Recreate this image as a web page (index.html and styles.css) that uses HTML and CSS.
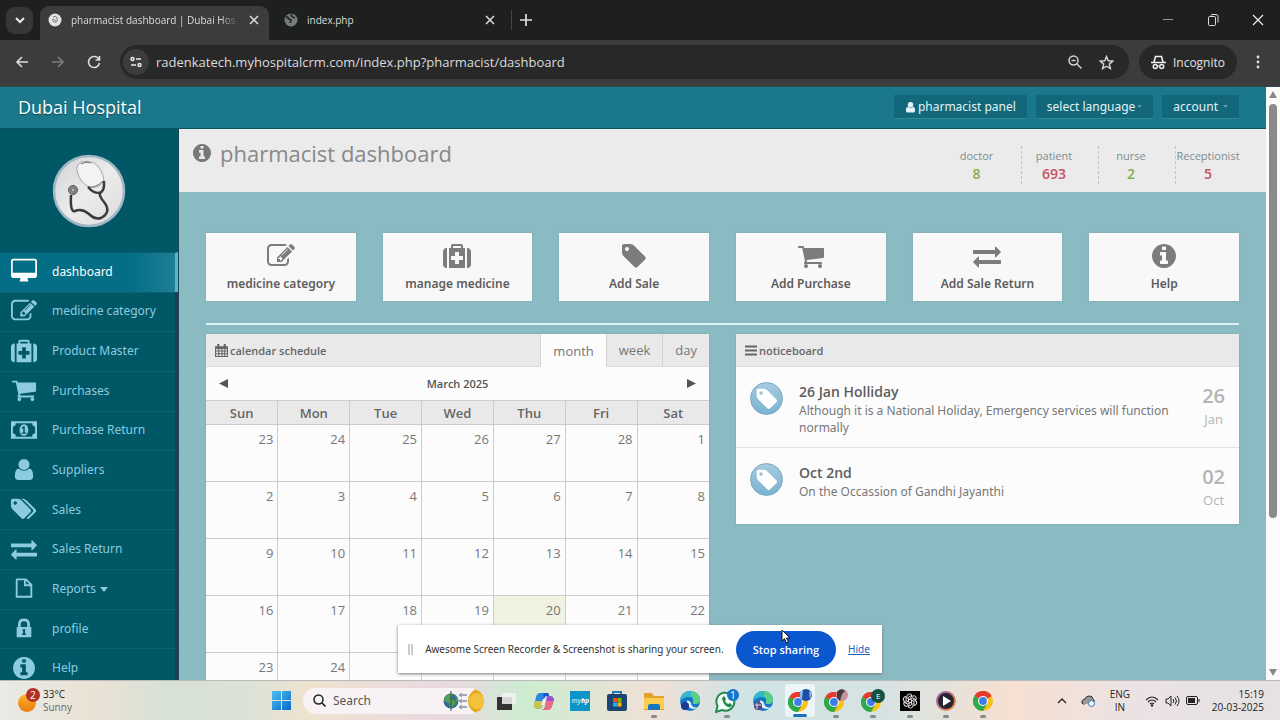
FILE: index.html
```
<!DOCTYPE html>
<html lang="en">
<head>
<meta charset="utf-8">
<title>pharmacist dashboard | Dubai Hospital</title>
<link rel="stylesheet" href="styles.css">
</head>
<body>

<svg class="sprite" aria-hidden="true">
  <symbol id="i-desktop" viewBox="0 0 1920 1792"><path d="M1792 992v-832q0-13-9.500-22.500t-22.500-9.500h-1600q-13 0-22.500 9.500t-9.500 22.500v832q0 13 9.500 22.500t22.500 9.500h1600q13 0 22.500-9.500t9.500-22.500zm128-832v1088q0 66-47 113t-113 47h-544q0 37 16 77.500t32 71 16 43.500q0 26-19 45t-45 19h-512q-26 0-45-19t-19-45q0-14 16-44t32-70 16-78h-544q-66 0-113-47t-47-113v-1088q0-66 47-113t113-47h1600q66 0 113 47t47 113z"/></symbol>
  <symbol id="i-edit" viewBox="0 0 1792 1792"><path d="M888 1184l116-116-152-152-116 116v56h96v96h56zm440-720q-16-16-33 1l-350 350q-17 17-1 33t33-1l350-350q17-17 1-33zm80 594v190q0 119-84.500 203.500t-203.500 84.500h-832q-119 0-203.500-84.500t-84.500-203.500v-832q0-119 84.500-203.500t203.500-84.500h832q63 0 117 25 15 7 18 23 3 17-9 29l-49 49q-14 14-32 8-23-6-45-6h-832q-66 0-113 47t-47 113v832q0 66 47 113t113 47h832q66 0 113-47t47-113v-126q0-13 9-22l64-64q15-15 35-7t20 29zm-96-738l288 288-672 672h-288v-288zm444 132l-92 92-288-288 92-92q28-28 68-28t68 28l152 152q28 28 28 68t-28 68z"/></symbol>
  <symbol id="i-medkit" viewBox="0 0 1792 1792"><path d="M1280 1120v-192q0-14-9-23t-23-9h-224v-224q0-14-9-23t-23-9h-192q-14 0-23 9t-9 23v224h-224q-14 0-23 9t-9 23v192q0 14 9 23t23 9h224v224q0 14 9 23t23 9h192q14 0 23-9t9-23v-224h224q14 0 23-9t9-23zm-640-736h512v-128h-512v128zm-384 0v1280h-32q-92 0-158-66t-66-158v-832q0-92 66-158t158-66h32zm1152 0v1280h-1024v-1280h128v-160q0-40 28-68t68-28h576q40 0 68 28t28 68v160h128zm384 224v832q0 92-66 158t-158 66h-32v-1280h32q92 0 158 66t66 158z"/></symbol>
  <symbol id="i-cart" viewBox="0 0 1792 1792"><path d="M704 1536q0 52-38 90t-90 38-90-38-38-90 38-90 90-38 90 38 38 90zm896 0q0 52-38 90t-90 38-90-38-38-90 38-90 90-38 90 38 38 90zm128-1088v512q0 24-16.500 42.500t-40.500 21.500l-1044 122q13 60 13 70 0 16-24 64h920q26 0 45 19t19 45-19 45-45 19h-1024q-26 0-45-19t-19-45q0-11 8-31.500t16-36 21.500-40 15.500-29.500l-177-823h-204q-26 0-45-19t-19-45 19-45 45-19h256q16 0 28.500 6.500t19.500 15.500 13 24.500 8 26 5.500 29.500 4.500 26h1201q26 0 45 19t19 45z"/></symbol>
  <symbol id="i-money" viewBox="0 0 27 24"><path fill-rule="evenodd" d="M0 3h27v18H0zM5 5Q5 8 2 8.500v7Q5 16 5 19h17Q22 16 25 15.500v-7Q22 8 22 5z"/><path fill-rule="evenodd" d="M13.500 6c6 0 6 12 0 12s-6-12 0-12zm.8 2h-1.500l-2 1.800 1 1 .9-.7v4.400H11V16h5v-1.500h-1.700z"/></symbol>
  <symbol id="i-user" viewBox="0 0 24 24"><circle cx="12" cy="7" r="6"/><path d="M6 11.500q6 5 12 0 4 1 4 8.500 0 4-4 4H6q-4 0-4-4 0-7.500 4-8.500z"/></symbol>
  <symbol id="i-tag" viewBox="0 0 1792 1792"><path d="M576 448q0-53-37.500-90.500t-90.500-37.500-90.500 37.500-37.500 90.500 37.500 90.500 90.500 37.500 90.500-37.500 37.500-90.500zm1067 576q0 53-37 90l-491 492q-39 37-91 37-53 0-90-37l-715-716q-38-37-64.500-101t-26.500-117v-416q0-52 38-90t90-38h416q53 0 117 26.500t102 64.500l715 714q37 39 37 91z"/></symbol>
  <symbol id="i-tags" viewBox="0 0 1960 1792"><path d="M448 448q0-53-37.500-90.500t-90.500-37.500-90.500 37.500-37.500 90.500 37.500 90.500 90.500 37.500 90.500-37.500 37.500-90.500zm1067 576q0 53-37 90l-491 492q-39 37-91 37-53 0-90-37l-715-716q-38-37-64.500-101t-26.500-117v-416q0-52 38-90t90-38h416q53 0 117 26.500t102 64.500l715 714q37 39 37 91zm384 0q0 53-37 90l-491 492q-39 37-91 37-36 0-59-14t-53-45l470-470q37-37 37-90 0-52-37-91l-715-714q-38-38-102-64.500t-117-26.500h224q53 0 117 26.500t102 64.500l715 714q37 39 37 91z"/></symbol>
  <symbol id="i-exchange" viewBox="0 0 1792 1792"><path d="M1792 1184v192q0 13-9.500 22.500t-22.500 9.500h-1376v192q0 13-9.500 22.500t-22.500 9.500q-12 0-24-10l-319-320q-9-9-9-22 0-14 9-23l320-320q9-9 23-9 13 0 22.500 9.500t9.500 22.500v192h1376q13 0 22.500 9.500t9.500 22.500zm0-544q0 14-9 23l-320 320q-9 9-23 9-13 0-22.500-9.500t-9.500-22.500v-192h-1376q-13 0-22.500-9.500t-9.500-22.500v-192q0-13 9.500-22.500t22.500-9.500h1376v-192q0-14 9-23t23-9q12 0 24 10l319 319q9 9 9 23z"/></symbol>
  <symbol id="i-file" viewBox="0 0 24 24"><path fill-rule="evenodd" d="M4 1.500h10.500L21 8v14.500H3v-20zm1 2v17h14V10h-7V3.500zm9 .5v4h4z"/></symbol>
  <symbol id="i-lock" viewBox="0 0 24 24"><path fill-rule="evenodd" d="M4 11h1.500V8q0-6.500 6.500-6.500T18.500 8v3H20v11H4zm4.500 0h7V8q0-3.500-3.500-3.500T8.500 8zM12 13q-2 0-2 1.700h1V18h-1v1.500h4V18h-.8v-5z"/></symbol>
  <symbol id="i-info" viewBox="128 128 1536 1536"><path d="M1152 1376v-160q0-14-9-23t-23-9h-96v-512q0-14-9-23t-23-9h-320q-14 0-23 9t-9 23v160q0 14 9 23t23 9h96v320h-96q-14 0-23 9t-9 23v160q0 14 9 23t23 9h448q14 0 23-9t9-23zm-128-896v-160q0-14-9-23t-23-9h-192q-14 0-23 9t-9 23v160q0 14 9 23t23 9h192q14 0 23-9t9-23zm640 416q0 209-103 385.500t-279.500 279.500-385.500 103-385.500-103-279.500-279.500-103-385.500 103-385.500 279.500-279.500 385.500-103 385.500 103 279.500 279.500 103 385.500z"/></symbol>
  <symbol id="i-calendar" viewBox="0 0 12 12"><path fill-rule="evenodd" d="M0 2h2V0h2v2h4V0h2v2h2v10H0zm1 2.500V6h2V4.500zm3 0V6h2V4.500zm3 0V6h1.500V4.500zm2.500 0V6H11V4.500zM1 7v1.500h2V7zm3 0v1.500h2V7zm3 0v1.500h1.500V7zm2.500 0v1.500H11V7zM1 9.500V11h2V9.500zm3 0V11h2V9.500zm3 0V11h1.500V9.500zm2.500 0V11H11V9.500z"/></symbol>
  <symbol id="i-bars" viewBox="0 0 12 12"><path d="M0 1.500h12v2H0zM0 5.500h12v2H0zM0 9.500h12v2H0z"/></symbol>
  <symbol id="i-caret" viewBox="0 0 8 5"><path d="M0 0h8L4 5z"/></symbol>
  <symbol id="i-close" viewBox="0 0 10 10"><path d="M1 1l8 8M9 1L1 9" fill="none" stroke="currentColor" stroke-width="1.500"/></symbol>
  <symbol id="i-chrome" viewBox="0 0 20 20"><circle cx="10" cy="10" r="10" fill="#fbc116"/><path d="M10 10L1.300 5A10 10 0 0 1 18.700 5z" fill="#e33b2e"/><path d="M10 10L1.300 5A10 10 0 0 0 10 20l4.300-7.500z" fill="#2da94f"/><circle cx="10" cy="10" r="5" fill="#fff"/><circle cx="10" cy="10" r="3.900" fill="#3b7ded"/></symbol>
  <symbol id="i-edge" viewBox="0 0 20 20"><circle cx="10" cy="10" r="10" fill="#1676c4"/><path d="M0 9C1 3 5 0 10 0c6 0 10 4 10 8 0 3-2 5-5 5-2 0-3-1-2-2 1-3-1-5-4-5-4 0-8 2-9 5z" fill="#35b8cf"/><path d="M11 0c5 0 9 4 9 8 0 3-2 5-5 5-2 0-3-1-2-2 1-3 0-5-2-6z" fill="#59cf87"/><path d="M7 10c-1 4 2 8 7 8 2 0 4-1 5-2-3 1-7 1-8-4-1-2-3-3-4-2z" fill="#dceffa"/></symbol>
</svg>

<header class="tabstrip">
  <button class="tab-search" aria-label="Search tabs"><svg width="10" height="7" viewBox="0 0 10 7"><path d="M1 1l4 4 4-4" fill="none" stroke="#e8e8e8" stroke-width="2"/></svg></button>
  <div class="tab active">
    <svg width="14" height="14" viewBox="0 0 14 14"><circle cx="7" cy="7" r="6.500" fill="#e3e3e3"/><path d="M5 4q3-2 4 1t-1 4-3-1 0-2 4 3" fill="none" stroke="#777"/></svg>
    <span class="tab-title">pharmacist dashboard | Dubai Hos</span>
    <button class="x" aria-label="Close tab"><svg width="10" height="10"><use href="#i-close"/></svg></button>
  </div>
  <div class="tab">
    <svg width="14" height="14" viewBox="0 0 14 14"><circle cx="7" cy="7" r="6.500" fill="#777b7b"/><path d="M2 4q2 0 3 2l2 1-1 3M8 1q-2 2 1 3l2 1" fill="none" stroke="#272a2a" stroke-width="1.800"/></svg>
    <span class="tab-title">index.php</span>
    <button class="x" aria-label="Close tab"><svg width="10" height="10"><use href="#i-close"/></svg></button>
  </div>
  <button class="newtab" aria-label="New tab"><svg width="12" height="12" viewBox="0 0 12 12"><path d="M6 0v12M0 6h12" stroke="#e0e0e0" stroke-width="1.700"/></svg></button>
  <div class="win">
    <button aria-label="Minimize"><svg width="12" height="12" viewBox="0 0 12 12"><path d="M1 5.500h10" stroke="#999"/></svg></button>
    <button aria-label="Restore"><svg width="12" height="12" viewBox="0 0 12 12"><path d="M1.500 3.500q0-1 1-1h5q1 0 1 1v7q0 1-1 1h-5q-1 0-1-1zM4 1.500q0-1 1-1h4q2 0 2 2v6" fill="none" stroke="#ddd"/></svg></button>
    <button aria-label="Close"><svg width="12" height="12" viewBox="0 0 12 12"><path d="M1 1l10 10M11 1L1 11" stroke="#eee" stroke-width="1.200"/></svg></button>
  </div>
</header>

<div class="toolbar">
  <button class="tool" aria-label="Back"><svg width="14" height="12" viewBox="0 0 14 12"><path d="M13 6H2M7 1L2 6l5 5" fill="none" stroke="#ddd" stroke-width="1.600"/></svg></button>
  <button class="tool" aria-label="Forward"><svg width="14" height="12" viewBox="0 0 14 12"><path d="M1 6h11M7 1l5 5-5 5" fill="none" stroke="#7c7c7c" stroke-width="1.600"/></svg></button>
  <button class="tool" aria-label="Reload"><svg width="14" height="14" viewBox="0 0 14 14"><path d="M12 4.500A5.500 5.500 0 1 0 12.500 8M12.500 1v4h-4" fill="none" stroke="#ddd" stroke-width="1.600"/></svg></button>
  <div class="omnibox">
    <button class="site" aria-label="Site information"><svg width="12" height="12" viewBox="0 0 12 12"><g fill="none" stroke="#e8e8e8" stroke-width="1.500"><circle cx="2.500" cy="3" r="1.500"/><path d="M6 3h5M1 9h5"/><circle cx="9.500" cy="9" r="1.500"/></g></svg></button>
    <input class="url" type="text" aria-label="Address" value="radenkatech.myhospitalcrm.com/index.php?pharmacist/dashboard">
    <button aria-label="Zoom"><svg width="14" height="14" viewBox="0 0 14 14"><g fill="none" stroke="#d0d0d0" stroke-width="1.500"><circle cx="5.500" cy="5.500" r="4.500"/><path d="M9 9l4.500 4.500M3.500 5.500h4"/></g></svg></button>
    <button aria-label="Bookmark"><svg width="15" height="15" viewBox="0 0 15 15"><path d="M7.500 1.500l1.700 4.300 4.600.3-3.500 3 1.100 4.500-3.900-2.400-3.900 2.400 1.100-4.500-3.500-3 4.600-.3z" fill="none" stroke="#d8d8d8" stroke-width="1.400"/></svg></button>
  </div>
  <button class="incognito"><svg width="15" height="15" viewBox="0 0 15 15"><path d="M0 7.500h15M3 7l1.500-5.500h6L12 7" fill="none" stroke="#eee" stroke-width="1.600"/><path d="M6.500 11.500q1-1 2 0" fill="none" stroke="#eee"/><circle cx="4.300" cy="11.500" r="2" fill="none" stroke="#eee" stroke-width="1.500"/><circle cx="10.700" cy="11.500" r="2" fill="none" stroke="#eee" stroke-width="1.500"/></svg>Incognito</button>
  <button class="kebab" aria-label="Menu"><svg width="4" height="16" viewBox="0 0 4 16"><g fill="#ddd"><circle cx="2" cy="3" r="1.400"/><circle cx="2" cy="8" r="1.400"/><circle cx="2" cy="13" r="1.400"/></g></svg></button>
</div>

<div class="viewport">
<div class="page">
  <div class="navbar">
    <a class="brand" href="#">Dubai Hospital</a>
    <div class="navbtns">
      <a class="navbtn" href="#"><svg width="11" height="12"><use href="#i-user"/></svg>pharmacist panel</a>
      <button class="navbtn">select language<svg class="caret" width="5" height="3"><use href="#i-caret"/></svg></button>
      <button class="navbtn">account <svg class="caret gap" width="5" height="3"><use href="#i-caret"/></svg></button>
    </div>
  </div>

  <div class="columns">
    <nav class="sidebar">
      <div class="avatar">
        <svg width="74" height="74" viewBox="0 0 74 74">
          <defs><linearGradient id="disc" x2="1" y2="1"><stop offset="0" stop-color="#cfd2d4"/><stop offset=".5" stop-color="#ececec"/><stop offset="1" stop-color="#dadada"/></linearGradient></defs>
          <circle cx="37" cy="37" r="35" fill="url(#disc)" stroke="#9fb8c4" stroke-width="2.500"/>
          <path d="M30 8q-6 2-5 9 3 13 13 16 10 2 14-7-2-12-10-17-6-3-12-1z" fill="#f2f3f3" stroke="#a2a5a6"/>
          <path d="M29 10q5-3 10-1M36 33q8 1 15-6" fill="none" stroke="#777"/>
          <path d="M52 27q1 11-5 12-6 0-11-6M48 39q-1 3 4 9 8 10-3 16-6 2-12-4-7-6-14-3-5 2-4-16" fill="none" stroke="#3b3b3b" stroke-width="2.500"/>
          <circle cx="21" cy="36" r="4.500" fill="#8b8b8b" stroke="#555"/><circle cx="21" cy="36" r="2" fill="#bbb" stroke="#666"/>
        </svg>
      </div>
      <ul class="menu">
        <li class="current"><a href="#"><svg><use href="#i-desktop"/></svg>dashboard</a></li>
        <li><a href="#"><svg><use href="#i-edit"/></svg>medicine category</a></li>
        <li><a href="#"><svg><use href="#i-medkit"/></svg>Product Master</a></li>
        <li><a href="#"><svg><use href="#i-cart"/></svg>Purchases</a></li>
        <li><a href="#"><svg><use href="#i-money"/></svg>Purchase Return</a></li>
        <li><a href="#"><svg class="sm"><use href="#i-user"/></svg>Suppliers</a></li>
        <li><a href="#"><svg><use href="#i-tags"/></svg>Sales</a></li>
        <li><a href="#"><svg><use href="#i-exchange"/></svg>Sales Return</a></li>
        <li><a href="#"><svg class="sm"><use href="#i-file"/></svg>Reports<svg class="drop"><use href="#i-caret"/></svg></a></li>
        <li><a href="#"><svg class="sm"><use href="#i-lock"/></svg>profile</a></li>
        <li><a href="#"><svg class="sm"><use href="#i-info"/></svg>Help</a></li>
      </ul>
    </nav>

    <main class="main">
      <div class="titlebar">
        <h1><svg width="18" height="18"><use href="#i-info"/></svg>pharmacist dashboard</h1>
        <dl class="stats">
          <div><dt>doctor</dt><dd class="green">8</dd></div>
          <div><dt>patient</dt><dd class="red">693</dd></div>
          <div><dt>nurse</dt><dd class="green">2</dd></div>
          <div><dt>Receptionist</dt><dd class="red">5</dd></div>
        </dl>
      </div>

      <div class="body">
        <div class="tiles">
          <a href="#"><svg><use href="#i-edit"/></svg>medicine category</a>
          <a href="#"><svg><use href="#i-medkit"/></svg>manage medicine</a>
          <a href="#"><svg><use href="#i-tag"/></svg>Add Sale</a>
          <a href="#"><svg><use href="#i-cart"/></svg>Add Purchase</a>
          <a href="#"><svg><use href="#i-exchange"/></svg>Add Sale Return</a>
          <a href="#"><svg class="round"><use href="#i-info"/></svg>Help</a>
        </div>
        <hr>
        <div class="panels">
          <section class="box">
            <div class="box-head">
              <h2><svg width="13" height="13"><use href="#i-calendar"/></svg>calendar schedule</h2>
              <div class="views"><button class="on">month</button><button>week</button><button>day</button></div>
            </div>
            <div class="monthnav">
              <button aria-label="Previous"><svg width="9" height="9" viewBox="0 0 9 9"><path d="M9 0v9L0 4.500z"/></svg></button>
              <b>March 2025</b>
              <button aria-label="Next"><svg width="9" height="9" viewBox="0 0 9 9"><path d="M0 0v9l9-4.500z"/></svg></button>
            </div>
            <table class="cal">
              <thead><tr><th>Sun</th><th>Mon</th><th>Tue</th><th>Wed</th><th>Thu</th><th>Fri</th><th>Sat</th></tr></thead>
              <tbody>
                <tr><td>23</td><td>24</td><td>25</td><td>26</td><td>27</td><td>28</td><td>1</td></tr>
                <tr><td>2</td><td>3</td><td>4</td><td>5</td><td>6</td><td>7</td><td>8</td></tr>
                <tr><td>9</td><td>10</td><td>11</td><td>12</td><td>13</td><td>14</td><td>15</td></tr>
                <tr><td>16</td><td>17</td><td>18</td><td>19</td><td class="today">20</td><td>21</td><td>22</td></tr>
                <tr><td>23</td><td>24</td><td>25</td><td>26</td><td>27</td><td>28</td><td>29</td></tr>
              </tbody>
            </table>
          </section>

          <section class="box">
            <div class="box-head"><h2><svg width="12" height="12"><use href="#i-bars"/></svg>noticeboard</h2></div>
            <article class="notice">
              <span class="badge"><svg width="24" height="24"><use href="#i-tag"/></svg></span>
              <div class="text"><h3>26 Jan Holliday</h3><p>Although it is a National Holiday, Emergency services will function normally</p></div>
              <div class="date"><b>26</b>Jan</div>
            </article>
            <article class="notice">
              <span class="badge"><svg width="24" height="24"><use href="#i-tag"/></svg></span>
              <div class="text"><h3>Oct 2nd</h3><p>On the Occassion of Gandhi Jayanthi</p></div>
              <div class="date"><b>02</b>Oct</div>
            </article>
          </section>
        </div>
      </div>
    </main>
  </div>
</div>
<div class="scrollbar">
  <svg width="8" height="7" viewBox="0 0 8 7"><path d="M4 0l4 7H0z" fill="#888"/></svg>
  <div class="track"><div class="thumb"></div></div>
  <svg width="8" height="7" viewBox="0 0 8 7"><path d="M4 7l4-7H0z" fill="#888"/></svg>
</div>
</div>

<div class="share">
  <span class="grip"></span>
  <span>Awesome Screen Recorder &amp; Screenshot is sharing your screen.</span>
  <button class="stop">Stop sharing<svg class="pointer" width="10" height="15" viewBox="0 0 10 15"><path d="M1 1v11l2.500-2.300L5.500 14l2-1-2-4H9z" fill="#fff" stroke="#111"/></svg></button>
  <a href="#">Hide</a>
</div>

<footer class="taskbar">
  <div class="weather">
    <svg width="24" height="26" viewBox="0 0 24 26"><defs><linearGradient id="sun" x2="0" y2="1"><stop offset="0" stop-color="#fbb423"/><stop offset="1" stop-color="#ec7a14"/></linearGradient></defs><circle cx="9" cy="15" r="9" fill="url(#sun)"/><circle cx="15" cy="7" r="7" fill="#b52f25"/><text x="12" y="11" font-size="10" fill="#fff">2</text></svg>
    <div>33°C<br><span>Sunny</span></div>
  </div>
  <div class="apps">
    <button class="start" aria-label="Start"><svg width="19" height="19" viewBox="0 0 19 19"><defs><linearGradient id="win" x2="1" y2="1"><stop offset="0" stop-color="#4cc1f4"/><stop offset="1" stop-color="#0a68c5"/></linearGradient></defs><path d="M0 0h9v9H0zM10 0h9v9h-9zM0 10h9v9H0zM10 10h9v9h-9z" fill="url(#win)"/></svg></button>
    <label class="search">
      <svg width="13" height="13" viewBox="0 0 13 13"><circle cx="5.500" cy="5.500" r="4.500" fill="none" stroke="#222" stroke-width="1.500"/><path d="M9 9l3.500 3.500" stroke="#222" stroke-width="1.700"/></svg>
      <input type="text" placeholder="Search" aria-label="Search">
      <svg width="41" height="24" viewBox="0 0 41 24"><circle cx="8" cy="12" r="7.500" fill="#316a9a"/><path d="M2 8q5-5 8-3l-2 5 5 2-2 5-4 2-1-5-5-2zM12 7l3 3-1 5z" fill="#4fa04f"/><path d="M8 2v20" stroke="#3c4b55"/><path d="M17 6h7M17 12h7M17 18h7" stroke="#8493a3" stroke-width="1.500"/><path d="M19 4l-3 2 3 2M19 10l-3 2 3 2M19 16l-3 2 3 2" fill="none" stroke="#8493a3"/><path d="M33 0l2 2 3-1v3l3 1-1 3 1 4-1 4 1 3-3 1v3l-3-1-2 2q-8-4-8-12t8-12z" fill="#e7a91c"/><circle cx="34" cy="12" r="8" fill="#f4c13a"/></svg>
    </label>
    <div class="icons">
      <button aria-label="Task view"><svg width="20" height="20" viewBox="0 0 20 20"><path d="M0 6h15v13H0z" fill="#333"/><path d="M5 2h14v11H5z" fill="#f3f3f3" fill-opacity=".85"/></svg></button>
      <button aria-label="Copilot"><svg width="20" height="20" viewBox="0 0 20 20"><path d="M6 2h7q2 0 2 3h-2q-2 0-3 3l-2 8q-1 2-4 2-4 0-4-4l2-8q1-4 4-4z" fill="#2d88e2"/><path d="M1 10h8l-1 6q-1 2-4 2-4 0-4-4z" fill="#c9c84a"/><path d="M13 5h3q4 0 4 4l-2 6q-1 4-5 4H8q2 0 3-3z" fill="#9554d8"/><path d="M12 10h7l-1 5q-1 4-5 4H8q2 0 3-3z" fill="#ee6c80"/><path d="M9 2h4q2 0 2 3h-3q-2 0-2 2z" fill="#1959c8"/><path d="M9 8h3l-2 6H7z" fill="#f7eef5"/></svg></button>
      <button aria-label="myhp"><span class="myhp">my<b>hp</b></span></button>
      <button aria-label="Store"><svg width="20" height="20" viewBox="0 0 20 20"><path d="M6 4V1h8v3" fill="none" stroke="#247bb8" stroke-width="2"/><rect y="3" width="20" height="17" rx="2" fill="#1d4573"/><path d="M6 7h4v4H6z" fill="#f25022"/><path d="M10.500 7h4v4h-4z" fill="#7fba00"/><path d="M6 11.500h4v4H6z" fill="#28a8ee"/><path d="M10.500 11.500h4v4h-4z" fill="#ffb900"/></svg></button>
      <button class="run" aria-label="Files"><svg width="20" height="20" viewBox="0 0 20 20"><path d="M0 2h8l2 3h10v14H0z" fill="#e2a32a"/><path d="M0 7h20v11H0z" fill="#fbcd4f"/><path d="M4 15q0-2 2-2h8q2 0 2 2v4H4z" fill="#1976bd"/></svg></button>
      <button aria-label="Edge"><svg width="20" height="20" viewBox="0 0 20 20"><use href="#i-edge" width="20" height="20"/><circle cx="5" cy="15" r="4" fill="#183c91"/></svg></button>
      <button class="run" aria-label="WhatsApp"><svg width="24" height="24" viewBox="0 0 24 24"><path d="M1 23l1.500-6A9 9 0 1 1 7 21z" fill="#f2fbf4" stroke="#238951" stroke-width="2"/><path d="M7 9l2-2 2 3-1 2q1 2 3 3l2-1 2 2q-1 3-4 2-5-2-6-9z" fill="#238951"/><circle cx="18" cy="6" r="6" fill="#1673ca"/><text x="15" y="10" font-size="10" fill="#fff">1</text></svg></button>
      <button aria-label="Edge"><svg width="20" height="20" viewBox="0 0 20 20"><use href="#i-edge" width="20" height="20"/><circle cx="5" cy="15" r="4" fill="#5a4687"/><path d="M2 14h6M4 12v6" stroke="#ddd"/></svg></button>
      <button class="run focus" aria-label="Chrome"><svg width="24" height="24" viewBox="0 0 24 24"><use href="#i-chrome" y="3" width="20" height="20"/><circle cx="18" cy="6" r="6" fill="#1b4fa8"/><path d="M12 2h3l-1 8-2-2zM21 2l3 2-2 7z" fill="#8fb8e8"/></svg></button>
      <button class="run" aria-label="Chrome"><svg width="24" height="24" viewBox="0 0 24 24"><use href="#i-chrome" y="3" width="20" height="20"/><circle cx="18" cy="6" r="6" fill="#c8909a"/><path d="M13 3q4-5 8-1l-3 3-2 7-3-3z" fill="#413c42"/></svg></button>
      <button class="run" aria-label="Chrome"><svg width="24" height="24" viewBox="0 0 24 24"><use href="#i-chrome" y="3" width="20" height="20"/><circle cx="17" cy="7" r="7" fill="#14523f"/><text x="15" y="10" font-size="8" fill="#fff">E</text></svg></button>
      <button class="run" aria-label="ChatGPT"><svg width="20" height="20" viewBox="0 0 20 20"><path d="M0 0h20v20H0z" fill="#000"/><g fill="none" stroke="#f2f2f2" stroke-width=".9"><path id="petal" d="M7 8V5.500q0-2.500 2.500-2.500 1.500 0 2.500 1.200L8.500 6.300V11"/><use href="#petal" transform="rotate(60 10 10)"/><use href="#petal" transform="rotate(120 10 10)"/><use href="#petal" transform="rotate(180 10 10)"/><use href="#petal" transform="rotate(240 10 10)"/><use href="#petal" transform="rotate(300 10 10)"/></g></svg></button>
      <button class="run" aria-label="Player"><svg width="20" height="20" viewBox="0 0 20 20"><defs><linearGradient id="ring" x2="1" y2="1"><stop offset="0" stop-color="#8c5bb0"/><stop offset="1" stop-color="#f2913a"/></linearGradient></defs><circle cx="10" cy="10" r="9" fill="#272330" stroke="url(#ring)" stroke-width="2"/><path d="M7 5l8 5-8 5z" fill="#fff"/></svg></button>
      <button class="run" aria-label="Chrome"><svg width="20" height="20"><use href="#i-chrome"/></svg></button>
    </div>
  </div>
  <div class="tray">
    <svg width="10" height="6" viewBox="0 0 10 6"><path d="M1 5l4-4 4 4" fill="none" stroke="#222" stroke-width="1.300"/></svg>
    <svg class="cloud" width="15" height="12" viewBox="0 0 15 12"><path d="M3 9.500q-3-1-2-3.500 1-2 3-2 1-3 4-3 4 0 4 3 2 1 1 3" fill="#999" stroke="#333"/><circle cx="10.500" cy="8.500" r="3" fill="#fff" stroke="#1d6fc0"/></svg>
    <div class="lang">ENG<br>IN</div>
    <svg width="14" height="12" viewBox="0 0 14 12"><path d="M1 5q6-6 12 0M3 7q4-4 8 0M5 9q2-2 4 0" fill="none" stroke="#222" stroke-width="1.100"/><circle cx="7" cy="10.500" r="1.200"/></svg>
    <svg width="15" height="12" viewBox="0 0 15 12"><path d="M1 4h2l3-3v10L3 8H1zM8 4q1.500 2 0 4M10 2.500q3 3.500 0 7M12 1q4 5 0 10" fill="none" stroke="#222"/></svg>
    <svg width="14" height="9" viewBox="0 0 14 9"><rect x=".5" y=".5" width="11" height="8" rx="1.500" fill="none" stroke="#222"/><path d="M2 2h7v5H2zM12.500 3h1v3h-1z"/></svg>
    <div class="clock">15:19<br>20-03-2025</div>
  </div>
</footer>

</body>
</html>
```
FILE: styles.css
```
* { box-sizing: border-box; }
body { margin: 0; height: 100vh; display: flex; flex-direction: column; overflow: hidden; font-family: "Open Sans", sans-serif; font-size: 13px; color: #666; }
button { border: 0; padding: 0; background: none; font: inherit; color: inherit; display: flex; align-items: center; justify-content: center; }
a { color: inherit; text-decoration: none; }
svg { fill: currentColor; flex: none; }
h1, h2, h3, p, ul, dl, dd { margin: 0; padding: 0; }
.sprite { display: none; }

/* browser window */
.tabstrip { height: 40px; flex: none; display: flex; align-items: flex-end; background: #1d201f; color: #ddd; font-size: 10px; padding-left: 6px; }
.tab-search { width: 27px; height: 27px; border-radius: 9px; background: #363837; align-self: center; margin-right: 7px; }
.tab { width: 236px; height: 34px; display: flex; align-items: center; gap: 9px; padding: 0 10px 6px 15px; }
.tab.active { width: 229px; background: #3c3c3c; border-radius: 9px 9px 0 0; padding: 0 10px 6px 8px; }
.tab-title { flex: 1; white-space: nowrap; }
.active .tab-title { -webkit-mask-image: linear-gradient(90deg, #000 88%, transparent); }
.newtab { width: 28px; height: 20px; margin: 0 0 10px 6px; border-left: 1px solid #444; }
.win { margin-left: auto; display: flex; align-self: center; }
.win button { width: 45px; height: 30px; }
.toolbar { height: 47px; flex: none; display: flex; align-items: center; background: #3c3c3c; color: #e3e3e3; padding: 0 7px 2px 4px; font-size: 12px; border-bottom: 1px solid #2f4a50; }
.tool { width: 36px; height: 30px; }
.omnibox { flex: 1; height: 34px; margin: 0 10px 0 8px; border-radius: 17px; background: #282828; display: flex; align-items: center; padding: 0 15px 0 3px; gap: 17px; }
.site { width: 26px; height: 26px; border-radius: 13px; background: #3c3c3c; }
.url { flex: 1; border: 0; padding: 0; margin-left: -10px; background: none; font: 13px "Open Sans", sans-serif; color: #dadcdc; outline: 0; }
.incognito { height: 34px; border-radius: 17px; background: #282828; padding: 0 12px; gap: 7px; }
.kebab { width: 30px; height: 30px; margin-left: 6px; }

.viewport { flex: 1; min-height: 0; display: flex; }
.page { flex: 1; min-width: 0; display: flex; flex-direction: column; overflow: hidden; background: #8abbc3; }
.scrollbar { width: 14px; background: #fbfbfb; display: flex; flex-direction: column; align-items: center; padding: 4px 0; }
.track { flex: 1; padding: 6px 0; }
.thumb { width: 8px; height: 74%; border-radius: 4px; background: #8a8a8a; }

/* top bar */
.navbar { height: 42px; flex: none; display: flex; align-items: center; justify-content: space-between; padding: 0 27px 1px 18px; background: #1a788a; border-bottom: 1px solid #0b545f; font: 12px "Noto Sans", sans-serif; }
.brand { color: #fff; font: 18px "Open Sans", sans-serif; text-shadow: 0 1px 1px #0a4c58; }
.navbtns { display: flex; gap: 9px; }
.navbtn { display: flex; align-items: center; height: 24px; padding: 0 11px; background: #12687a; border-bottom: 1px solid #2b8998; color: #e4f2f5; }
.navbtn svg { margin-right: 2px; }
.navbtn .caret { margin: 0 0 0 2px; color: #5fa0ac; }
.navbtn .gap { margin-left: 5px; }

.columns { flex: 1; min-height: 0; display: flex; }
.sidebar { width: 179px; flex: none; background: #005766; border-right: 1px solid #1c4355; }
.avatar { height: 123px; display: flex; align-items: center; justify-content: center; }
.menu { height: 436px; display: grid; grid-auto-rows: 1fr; list-style: none; color: #8ccbe0; font: 12px "Noto Sans", sans-serif; }
.menu li { border-top: 1px solid #0a606f; border-right: 3px solid #273a53; }
.menu a { height: 100%; display: flex; align-items: center; padding: 0 0 2px 11px; }
.menu svg { width: 26px; height: 26px; margin-right: 15px; }
.menu .sm { height: 22px; }
.menu .drop { width: 8px; height: 5px; margin: 3px 0 0 4px; }
.menu .current { color: #fff; background: linear-gradient(90deg, #046e87 75%, #1f7f95); border-right-color: #59b7cb; }

.main { flex: 1; min-width: 0; }
.titlebar { height: 63px; display: flex; justify-content: space-between; background: #ebebeb; padding: 0 14px; }
h1 { display: flex; align-items: center; gap: 9px; height: 47px; font-size: 22px; font-weight: 400; color: #888; }
h1 svg { color: #777; }
.stats { display: flex; padding-top: 17px; text-align: center; }
.stats div { width: 77px; height: 38px; padding-right: 12px; border-left: 1px dashed #c4c4c4; line-height: 18px; white-space: nowrap; }
.stats div:first-child { border: 0; }
.stats dt { font-size: 11px; color: #7f8c92; display: flex; justify-content: center; padding-top: 1px; }
.stats dd { font-size: 14px; font-weight: 600; }
.green { color: #8cab4e; }
.red { color: #c4525f; }

.body { padding: 41px 27px 0; }
.tiles { display: grid; grid-template-columns: repeat(6, 1fr); gap: 27px; }
.tiles a { height: 68px; display: flex; flex-direction: column; align-items: center; background: #f8f8f8; box-shadow: 0 0 2px #8aa3a6; padding-top: 9px; gap: 5px; font: 600 12px/18px "Noto Sans", sans-serif; color: #5d5d5d; }
.tiles svg { width: 28px; height: 28px; color: #7c7c7c; }
.tiles .round { height: 24px; margin: 2px 0; }
hr { height: 2px; border: 0; margin: 22px 0 9px; background: #d9f3f3; }
.panels { display: grid; grid-template-columns: 1fr 1fr; gap: 27px; align-items: start; }
.box { background: #fcfcfc; box-shadow: 0 0 2px #7fa3a8; }
.box-head { height: 33px; display: flex; justify-content: space-between; background: #e9e9e9; border-bottom: 1px solid #dcdcdc; padding-left: 9px; }
h2 { display: flex; align-items: center; gap: 2px; font-size: 11px; font-weight: 600; color: #666; }
.views { display: flex; color: #777; }
.views button { padding: 0 12px; border-left: 1px solid #d5d5d5; }
.views .on { background: #fcfcfc; height: 33px; }
.monthnav { height: 33px; display: flex; align-items: center; justify-content: space-between; padding: 0 13px; font-size: 11px; color: #555; }
.monthnav b { font-weight: 600; }
.cal { width: 100%; table-layout: fixed; border-collapse: collapse; }
.cal th { height: 24px; padding: 0; background: #e9e9e9; border: 1px solid #ccc; font-weight: 600; }
.cal td { height: 57px; padding: 5px 4px 0; border: 1px solid #ccc; vertical-align: top; text-align: right; color: #777; }
.cal tr > :first-child { border-left: 0; }
.cal tr > :last-child { border-right: 0; }
.cal .today { background: #f2f2e2; }
.notice { display: flex; min-height: 76px; padding: 15px 14px 11px; border-bottom: 1px solid #e2e2e2; }
.notice:last-child { border: 0; }
.badge { width: 33px; height: 33px; flex: none; display: flex; align-items: center; justify-content: center; border-radius: 50%; border: 1px solid #76a7bf; background: linear-gradient(#a6cbdf, #7ab2d0); color: #fff; }
.text { flex: 1; padding: 0 20px 0 16px; }
.text p { font: 12px/17px "Noto Sans", sans-serif; color: #777; }
h3 { font-size: 14px; font-weight: 600; line-height: 20px; color: #5c5c5c; }
.date { text-align: center; color: #b5b5b5; line-height: 18px; }
.date b { display: block; font-size: 20px; font-weight: 600; line-height: 28px; }

/* sharing bar floats above the page */
.share { position: absolute; bottom: 47px; left: 0; right: 0; width: fit-content; height: 48px; margin: 0 auto; display: flex; align-items: center; gap: 12px; padding: 0 12px 0 10px; background: #fff; box-shadow: 0 1px 3px #777; color: #333; font: 10px "Noto Sans", sans-serif; }
.grip { width: 5px; height: 11px; border: solid #ccc; border-width: 0 2px; }
.share a { color: #1b62b8; text-decoration: underline; }
.stop { position: relative; height: 37px; padding: 0 17px; border-radius: 19px; background: #0b57d0; color: #fff; font: 600 11px "Open Sans", sans-serif; }
.pointer { position: absolute; left: 45px; top: -2px; }

/* taskbar */
.taskbar { height: 40px; flex: none; display: grid; grid-template-columns: 263px auto 1fr; align-items: center; border-top: 1px solid #b9b9b9; color: #222; font-size: 10px; line-height: 13px; background: linear-gradient(90deg, #e8ebe5 0, #ebe2d5 7%, #d8e1d6 13%, #dbe2d8 19%, #efe2cf 24%, #ead8e2 35%, #cdecd0 41%, #f0e0d6 51%, #d0e3e5 58%, #d6e3e3 69%, #f6e0d1 79%, #ebe2e5 89%, #e5e2e3 100%); }
.weather { display: flex; align-items: center; gap: 1px; padding-left: 18px; }
.weather span { color: #666; }
.apps { display: flex; align-items: center; }
.start { width: 37px; height: 36px; }
.search { width: 181px; height: 26px; margin: 0 5px 0 3px; display: flex; align-items: center; padding-left: 10px; gap: 7px; border-radius: 13px; background: #f8f2f5; overflow: hidden; }
.search input { flex: 1; min-width: 0; padding: 0; border: 0; background: none; font: 12px "Noto Sans", sans-serif; }
.search input::placeholder { color: #555; }
.icons { width: 512px; display: grid; grid-template-columns: repeat(14, 1fr); }
.icons button { height: 37px; position: relative; }
.icons .run::after { content: ""; position: absolute; bottom: 1px; left: 50%; width: 6px; height: 3px; margin-left: -3px; border-radius: 2px; background: #858a8c; }
.icons .focus { background: #eef5f7; margin: 0 3px; border-radius: 3px; height: 33px; align-self: center; }
.icons .focus::after { width: 14px; margin-left: -7px; background: #1a73bd; bottom: 0; }
.myhp { width: 20px; height: 20px; background: #0c94c9; color: #fff; font-size: 7px; font-style: italic; line-height: 20px; text-align: center; }
.tray { display: flex; align-items: center; justify-content: flex-end; gap: 6px; padding-right: 16px; }
.cloud { margin: 0 7px 0 8px; }
.lang { width: 22px; text-align: center; margin-right: 8px; }
.clock { text-align: right; margin-left: 6px; }
```
